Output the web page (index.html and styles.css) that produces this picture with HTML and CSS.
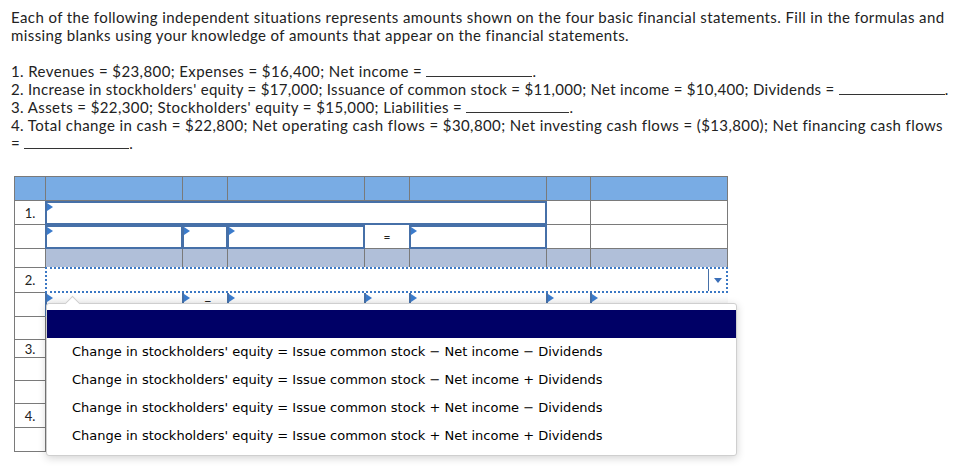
FILE: index.html
```html
<!DOCTYPE html>
<html>
<head>
<meta charset="utf-8">
<link rel="stylesheet" href="styles.css">
</head>
<body>
<div class="page">
  <div class="intro">
    <p class="ln">Each of the following independent situations represents amounts shown on the four basic financial statements. Fill in the formulas and</p>
    <p class="ln">missing blanks using your knowledge of amounts that appear on the financial statements.</p>
  </div>
  <div class="items">
    <p class="ln">1. Revenues = $23,800; Expenses = $16,400; Net income = <span class="blank b106"></span>.</p>
    <p class="ln tight">2. Increase in stockholders' equity = $17,000; Issuance of common stock = $11,000; Net income = $10,400; Dividends = <span class="blank b108"></span>.</p>
    <p class="ln">3. Assets = $22,300; Stockholders' equity = $15,000; Liabilities = <span class="blank b103"></span>.</p>
    <p class="ln">4. Total change in cash = $22,800; Net operating cash flows = $30,800; Net investing cash flows = ($13,800); Net financing cash flows</p>
    <p class="ln">= <span class="blank b105"></span>.</p>
  </div>

  <div class="sheet">
    <div class="grid">
      <!-- header -->
      <div class="c hd"></div><div class="c hd"></div><div class="c hd"></div><div class="c hd"></div><div class="c hd"></div><div class="c hd"></div><div class="c hd"></div><div class="c hd"></div>
      <!-- row 1 -->
      <div class="c num">1.</div>
      <div class="c inp span5"><div class="box"></div></div>
      <div class="c"></div><div class="c"></div>
      <!-- row 1b -->
      <div class="c"></div>
      <div class="c inp"><div class="box"></div></div>
      <div class="c inp"><div class="box"></div></div>
      <div class="c inp"><div class="box"></div></div>
      <div class="c op">=</div>
      <div class="c inp"><div class="box"></div></div>
      <div class="c"></div><div class="c"></div>
      <!-- gray row -->
      <div class="c"></div><div class="c gr"></div><div class="c gr"></div><div class="c gr"></div><div class="c gr"></div><div class="c gr"></div><div class="c gr"></div><div class="c gr"></div>
      <!-- row 2 select -->
      <div class="c num">2.</div>
      <div class="c sel span7"><div class="selbox"><div class="selfill"></div><div class="arrow"><span class="tri"></span></div></div></div>
      <!-- row 2b -->
      <div class="c"></div>
      <div class="c inp"><div class="box soft"></div></div>
      <div class="c inp"><div class="box soft"><span class="minus">−</span></div></div>
      <div class="c inp"><div class="box soft"></div></div>
      <div class="c inp"><div class="box soft"></div></div>
      <div class="c inp"><div class="box soft"></div></div>
      <div class="c inp"><div class="box soft"></div></div>
      <div class="c inp"><div class="box soft"></div></div>
      <!-- remaining rows -->
      <div class="c"></div><div class="c"></div><div class="c"></div><div class="c"></div><div class="c"></div><div class="c"></div><div class="c"></div><div class="c"></div>
      <div class="c num top">3.</div><div class="c"></div><div class="c"></div><div class="c"></div><div class="c"></div><div class="c"></div><div class="c"></div><div class="c"></div>
      <div class="c"></div><div class="c"></div><div class="c"></div><div class="c"></div><div class="c"></div><div class="c"></div><div class="c"></div><div class="c"></div>
      <div class="c"></div><div class="c"></div><div class="c"></div><div class="c"></div><div class="c"></div><div class="c"></div><div class="c"></div><div class="c"></div>
      <div class="c num">4.</div><div class="c"></div><div class="c"></div><div class="c"></div><div class="c"></div><div class="c"></div><div class="c"></div><div class="c"></div>
      <div class="c"></div><div class="c"></div><div class="c"></div><div class="c"></div><div class="c"></div><div class="c"></div><div class="c"></div><div class="c"></div>
    </div>

    <div class="popup">
      <div class="notch"></div>
      <div class="opt hl"></div>
      <div class="opt">Change in stockholders' equity = Issue common stock − Net income − Dividends</div>
      <div class="opt">Change in stockholders' equity = Issue common stock − Net income + Dividends</div>
      <div class="opt">Change in stockholders' equity = Issue common stock + Net income − Dividends</div>
      <div class="opt">Change in stockholders' equity = Issue common stock + Net income + Dividends</div>
    </div>
  </div>
</div>
</body>
</html>
```

FILE: styles.css
```css
html, body {
  margin: 0;
  padding: 0;
  background: #fff;
}
.page {
  padding: 8px 11px 24px 11px;
  font-family: "Lato", "Liberation Sans", sans-serif;
  font-size: 15px;
  letter-spacing: 0.4px;
  color: #222;
}
.ln {
  margin: 0;
  line-height: 18px;
  white-space: nowrap;
}
.ln.tight {
  letter-spacing: 0.3px;
}
.intro {
  margin-bottom: 18px;
}
.blank {
  display: inline-block;
  height: 12px;
  border-bottom: 1px solid #333;
}
.b106 { width: 106px; }
.b108 { width: 106px; }
.b103 { width: 103px; }
.b105 { width: 105px; }

.sheet {
  position: relative;
  margin: 24px 0 0 3px;
  width: 714px;
  letter-spacing: 0;
}
.grid {
  display: grid;
  grid-template-columns: 31px 137px 45px 137px 45px 137px 44px 137px;
  grid-template-rows: 24px 24px 24px 19px 25px 24px 23px 18px 23px 23px 24px 24px;
  border-left: 1px solid #7a7a7a;
  border-top: 1px solid #7a7a7a;
  width: 713px;
}
.c {
  box-sizing: border-box;
  border-right: 1px solid #7a7a7a;
  border-bottom: 1px solid #7a7a7a;
  background: #fff;
}
.hd { background: #79ace4; }
.gr { background: #b0bfd9; }
.num {
  font-size: 13px;
  color: #222;
  display: flex;
  align-items: center;
  justify-content: center;
}
.num.top { align-items: flex-start; padding-top: 1px; }
.span5 { grid-column: span 5; }
.span7 { grid-column: span 7; }
.op {
  display: flex;
  align-items: center;
  justify-content: center;
  font-size: 12px;
  color: #222;
}
.inp {
  border: none;
  background: transparent;
}
.box {
  position: relative;
  box-sizing: border-box;
  margin-left: -1px;
  width: calc(100% + 1px);
  height: 100%;
  border: 2px solid #4670a8;
  background: #fff;
}
.box::before {
  content: "";
  position: absolute;
  left: 0;
  top: 0;
  border-left: 6px solid #3b7bcb;
  border-top: 4px solid transparent;
  border-bottom: 4px solid transparent;
}
.box.soft {
  border-top: none;
  border-right: none;
  border-bottom: 1px solid #c8c8c8;
  background: linear-gradient(#fff, #ededed);
}
.box.soft::before { top: 1px; }
.minus {
  position: absolute;
  left: 20px;
  top: 0;
  font-size: 13px;
  line-height: 16px;
}
.sel {
  border: none;
  background: transparent;
}
.selbox {
  box-sizing: border-box;
  margin: -1px 0 0 -1px;
  width: calc(100% + 1px);
  height: 26px;
  border: 2px dotted #3b78c4;
  background: #fff;
  display: flex;
}
.selfill { flex: 1; }
.arrow {
  width: 17px;
  border-left: 1px solid #4670a8;
  display: flex;
  align-items: center;
  justify-content: center;
}
.tri {
  width: 0;
  height: 0;
  border-left: 4px solid transparent;
  border-right: 4px solid transparent;
  border-top: 5px solid #3b6fb8;
  margin-top: 1px;
}

.popup {
  position: absolute;
  left: 32px;
  top: 127px;
  width: 691px;
  height: 153px;
  box-sizing: border-box;
  background: #fff;
  border: 1px solid #cfcfcf;
  border-radius: 3px;
  box-shadow: 0 2px 8px rgba(0, 0, 0, 0.18);
  padding-top: 6px;
  font-family: "DejaVu Sans", Verdana, sans-serif;
  font-size: 13px;
  color: #000;
}
.notch {
  position: absolute;
  left: 20px;
  top: -6px;
  width: 10px;
  height: 10px;
  background: #fff;
  border-top: 1px solid #cfcfcf;
  border-left: 1px solid #cfcfcf;
  transform: rotate(45deg);
}
.opt {
  position: relative;
  height: 28px;
  line-height: 28px;
  padding-left: 25px;
  white-space: nowrap;
}
.opt.hl {
  background: #000066;
}
```
